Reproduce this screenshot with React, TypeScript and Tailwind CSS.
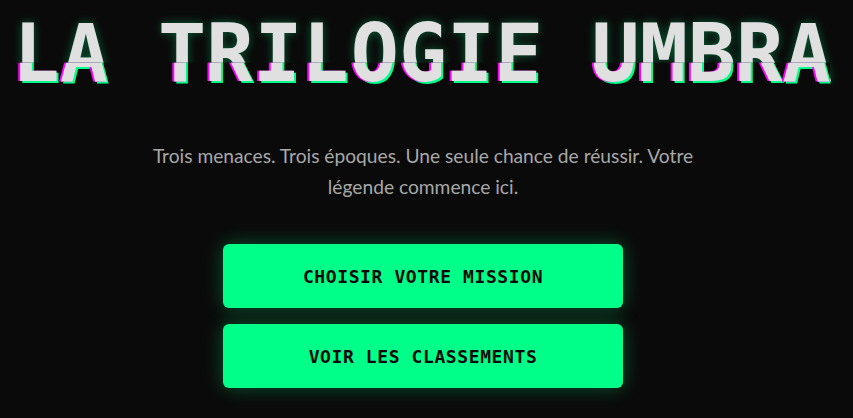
import React from "react";

export default function App() {
  const title = "LA TRILOGIE UMBRA";
  const btn =
    "h-16 rounded-md bg-[#00ff88] text-[#0a0a0a] font-bold text-[18px] tracking-[0.6px] shadow-[0_0_20px_rgba(0,255,136,0.3)] font-['DejaVu_Sans_Mono','Liberation_Mono',monospace]";
  return (
    <div className="min-h-[418px] w-full bg-[#0a0a0a] overflow-hidden">
      <div className="w-[846px] flex flex-col items-center">
        <h1
          data-text={title}
          className="relative mt-[10px] text-[80px] leading-[88px] font-bold text-[#e0e0e0] whitespace-nowrap font-['DejaVu_Sans_Mono','Liberation_Mono',monospace] [text-shadow:0_0_10px_rgba(0,255,136,0.35)] before:content-[attr(data-text)] before:absolute before:inset-0 before:bg-[#0a0a0a] before:-translate-x-[2px] before:[clip-path:inset(60%_0_0_0)] before:[text-shadow:-2px_0_#ff00ff,2px_2px_#00ff88]"
        >
          {title}
        </h1>
        <p className="mt-[43px] max-w-[576px] text-center text-[19.2px] leading-[30.7px] text-[#a8a8a8] font-['Lato','Open_Sans',sans-serif]">
          Trois menaces. Trois époques. Une seule chance de réussir. Votre légende commence ici.
        </p>
        <div className="mt-[42px] flex flex-col gap-4 w-[400px]">
          <button className={btn}>CHOISIR VOTRE MISSION</button>
          <button className={btn}>VOIR LES CLASSEMENTS</button>
        </div>
      </div>
    </div>
  );
}
